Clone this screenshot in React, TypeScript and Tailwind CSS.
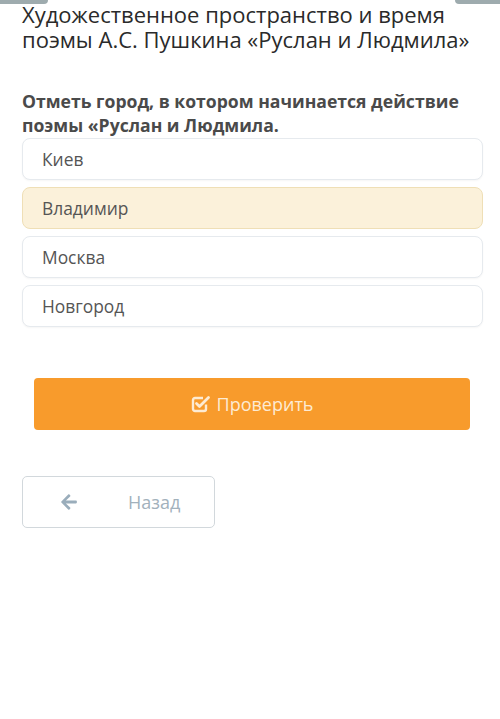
import React from "react";
import { FaArrowLeft } from "react-icons/fa";

const options = ["Киев", "Владимир", "Москва", "Новгород"];

function CheckSquareIcon() {
  return (
    <svg viewBox="0 0 20 20" className="w-[20px] h-[20px]" fill="none">
      <path
        d="M15 10.5V15a2 2 0 0 1-2 2H4a2 2 0 0 1-2-2V6a2 2 0 0 1 2-2h8"
        stroke="currentColor"
        strokeWidth="2.4"
        strokeLinejoin="round"
      />
      <path
        d="M5.5 9.5l3 3L17.5 3.5"
        stroke="currentColor"
        strokeWidth="2.8"
        strokeLinecap="round"
        strokeLinejoin="round"
      />
    </svg>
  );
}

export default function App() {
  return (
    <div className="w-[500px] h-[719px] bg-white font-['Open_Sans',sans-serif] overflow-hidden">
      {/* обрезанные элементы сверху */}
      <div className="flex justify-between h-[4px]">
        <div className="w-[48px] h-full bg-[#9eabae] rounded-br-md" />
        <div className="w-[45px] h-full bg-[#9eabae] rounded-bl-md" />
      </div>

      <h1 className="px-[22px] text-[22px] leading-[25px] text-[#2a2a2a] -mt-[2px]">
        Художественное пространство и время поэмы А.С. Пушкина «Руслан и Людмила»
      </h1>

      <p className="mt-[37px] pl-[22px] pr-[14px] text-[17.6px] leading-[24px] font-bold text-[#4a4a4a]">
        Отметь город, в котором начинается действие поэмы «Руслан и Людмила.
      </p>

      <div className="mt-[1px] ml-[22px] mr-[17px] flex flex-col gap-[7px]">
        {options.map((o) => (
          <div
            key={o}
            className={
              o === "Владимир"
                ? "h-[42px] flex items-center pl-[19px] rounded-lg border border-[#efdfb6] bg-[#fbf1da] text-[17.4px] text-[#555]"
                : "h-[42px] flex items-center pl-[19px] rounded-lg border border-[#e6eaee] bg-white shadow-[0_1px_2px_rgba(0,0,0,0.04)] text-[17.4px] text-[#555]"
            }
          >
            {o}
          </div>
        ))}
      </div>

      <div className="mt-[51px] ml-[34px] mr-[30px]">
        <button className="w-full h-[52px] rounded-[4px] bg-[#f89b2c] flex items-center justify-center gap-[6px] text-[18px] text-[#fdebd3]">
          <CheckSquareIcon />
          Проверить
        </button>
      </div>

      <div className="mt-[46px] ml-[22px]">
        <button className="w-[193px] h-[52px] rounded-[5px] border border-[#d2d8dc] bg-white flex items-center pl-[37px] text-[18px] text-[#a2b1bc]">
          <FaArrowLeft className="w-[18px] h-[18px] text-[#9aadbb]" />
          <span className="ml-[50px]">Назад</span>
        </button>
      </div>
    </div>
  );
}
